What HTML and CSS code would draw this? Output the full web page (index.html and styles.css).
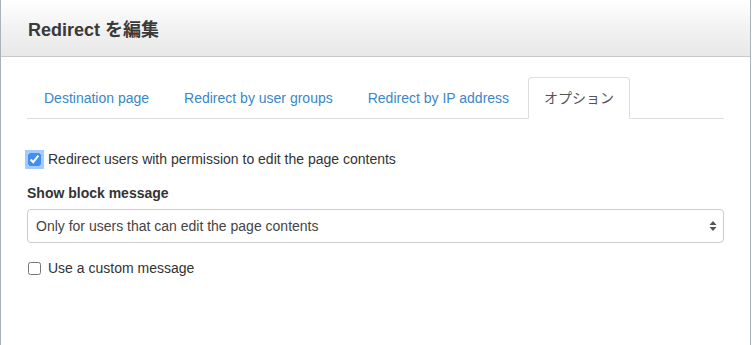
FILE: index.html
```html
<!DOCTYPE html>
<html lang="ja">

<head>
    <meta charset="UTF-8">
    <meta name="viewport" content="width=device-width, initial-scale=1.0">
    <title>Redirect を編集</title>
    <link rel="stylesheet" href="styles.css">
</head>

<body>
    <div class="modal">
        <header class="modal-header">
            <h1>Redirect を編集</h1>
        </header>

        <div class="modal-body">
            <nav class="tabs">
                <a href="#destination">Destination page</a>
                <a href="#groups">Redirect by user groups</a>
                <a href="#ip">Redirect by IP address</a>
                <a href="#options" class="active">オプション</a>
            </nav>

            <section class="options">
                <label class="check focused">
                    <input type="checkbox" checked>
                    <span>Redirect users with permission to edit the page contents</span>
                </label>

                <label class="field-label" for="block-message">Show block message</label>
                <div class="select-wrap">
                    <select id="block-message">
                        <option>Only for users that can edit the page contents</option>
                        <option>Always</option>
                        <option>Never</option>
                    </select>
                    <svg class="select-arrows" width="8" height="12" viewBox="0 0 8 12">
                        <path d="M4 1 L7.5 5 L0.5 5 Z" fill="#555"/>
                        <path d="M4 11 L7.5 7 L0.5 7 Z" fill="#555"/>
                    </svg>
                </div>

                <label class="check">
                    <input type="checkbox">
                    <span>Use a custom message</span>
                </label>
            </section>
        </div>
    </div>
</body>

</html>
```

FILE: styles.css
```css
body {
    font-family: "Liberation Sans", Arial, "Noto Sans CJK JP", sans-serif;
    margin: 0;
    padding: 0;
    color: #333;
    background: #fff;
}

.modal {
    width: 749px;
    height: 345px;
    border-left: 1px solid #a9b3bd;
    border-right: 1px solid #a9b3bd;
    background: #fff;
}

.modal-header {
    height: 56px;
    border-bottom: 1px solid #c8c8c8;
    background: linear-gradient(to bottom, #ffffff 0%, #f3f3f3 45%, #e8e8e8 100%);
    display: flex;
    align-items: center;
    padding: 0 27px;
}

.modal-header h1 {
    margin: 0;
    font-size: 18px;
    font-weight: bold;
    color: #3a3a3a;
}

.modal-body {
    padding: 20px 26px 0 26px;
}

.tabs {
    display: flex;
    border-bottom: 1px solid #ddd;
    padding-left: 1px;
    gap: 3px;
}

.tabs a {
    display: block;
    padding: 10px 15px;
    line-height: 20px;
    font-size: 14px;
    color: #3a87c9;
    text-decoration: none;
    border: 1px solid transparent;
    border-radius: 4px 4px 0 0;
    margin-bottom: -1px;
}

.tabs a.active {
    color: #555;
    background: #fff;
    border-color: #ddd;
    border-bottom-color: #fff;
}

.options {
    padding-top: 30px;
    font-size: 14px;
}

.check {
    display: flex;
    align-items: center;
    gap: 7px;
    height: 20px;
    line-height: 20px;
    color: #333;
}

.check input {
    margin: 0 0 0 1px;
    width: 13px;
    height: 13px;
    accent-color: #3f8ff7;
}

.check.focused input {
    outline: 3px solid rgba(90, 160, 250, 0.55);
    outline-offset: 0;
    border-radius: 3px;
}

.field-label {
    display: block;
    margin-top: 14px;
    font-weight: bold;
    line-height: 20px;
    color: #333;
}

.select-wrap {
    position: relative;
    margin-top: 6px;
}

.select-wrap select {
    display: block;
    width: 100%;
    height: 34px;
    padding: 0 8px;
    font-family: inherit;
    font-size: 14px;
    color: #444;
    background: #fff;
    border: 1px solid #ccc;
    border-radius: 4px;
    appearance: none;
    -webkit-appearance: none;
}

.select-arrows {
    position: absolute;
    right: 7px;
    top: 11px;
    pointer-events: none;
}

.options .check:last-child {
    margin-top: 15px;
}
```
